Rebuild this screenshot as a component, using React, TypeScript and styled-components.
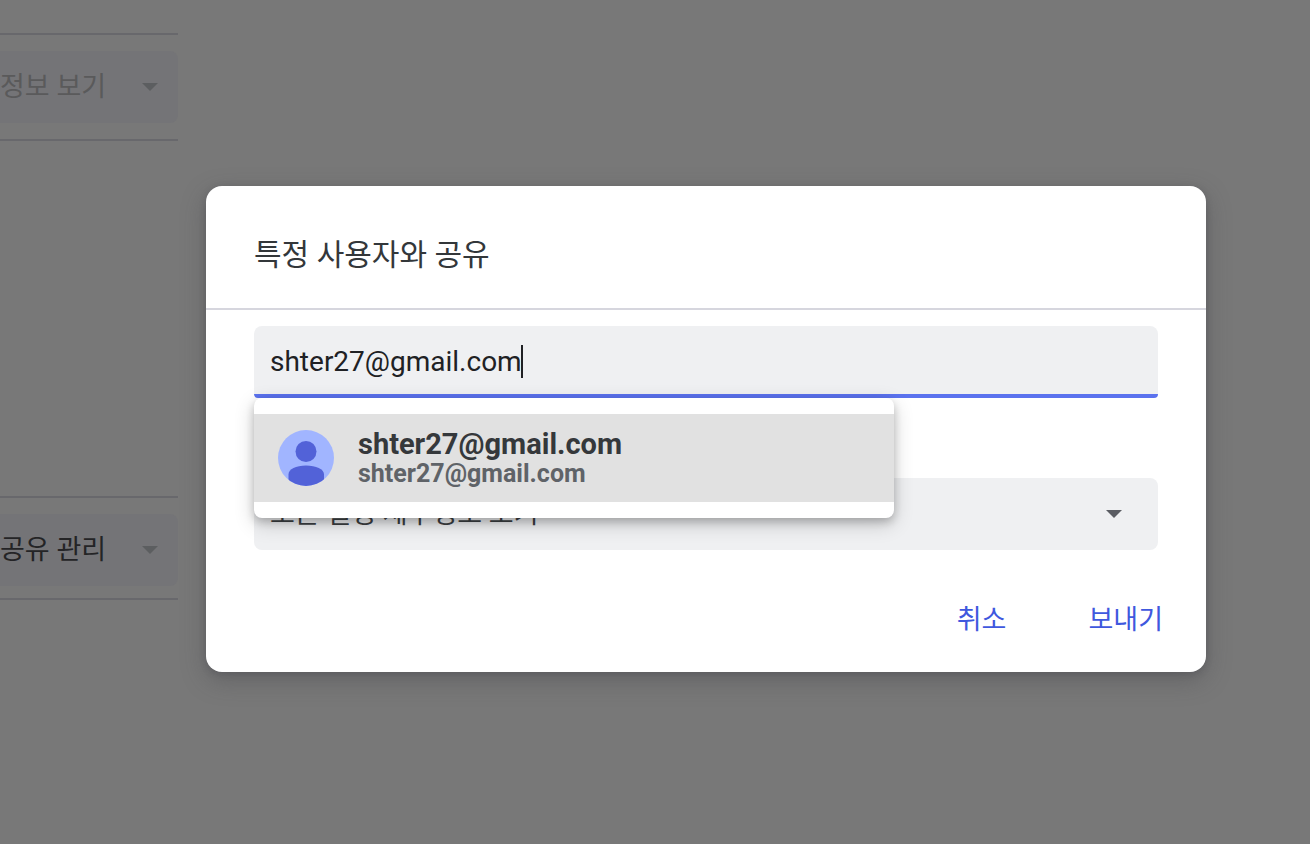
import React, { useState } from "react";
import styled, { createGlobalStyle } from "styled-components";

const GlobalStyle = createGlobalStyle`
  * { box-sizing: border-box; }
  html, body { margin: 0; }
  body {
    background: #787878;
    font-family: Roboto, "Noto Sans CJK KR", sans-serif;
  }
  input, select, button { font-family: inherit; }
`;

const Screen = styled.div`
  display: flex;
  align-items: flex-start;
  gap: 28px;
  min-height: 100vh;
  padding-right: 104px;
`;

const Background = styled.aside`
  flex: 0 0 178px;
  display: flex;
  flex-direction: column;
  gap: 355px;
  padding-top: 33px;
`;

const SettingRow = styled.section<{ $bottom: number }>`
  border-top: 2px solid #68686c;
  border-bottom: 2px solid #68686c;
  padding: 16px 0 ${(p) => p.$bottom}px;
`;

const SelectBox = styled.div<{ $dimmed?: boolean }>`
  position: relative;
  height: 72px;
  border-radius: ${(p) => (p.$dimmed ? "0 8px 8px 0" : "8px")};
  background: ${(p) => (p.$dimmed ? "#747477" : "#eff0f2")};
`;

const Select = styled.select<{ $color: string; $inset: number }>`
  appearance: none;
  display: block;
  width: 100%;
  height: 100%;
  padding: 0 72px 0 ${(p) => p.$inset}px;
  border: 0;
  outline: 0;
  background: transparent;
  color: ${(p) => p.$color};
  font-size: 27px;
  line-height: 40px;
`;

const Arrow = styled.svg<{ $right: number; $color: string }>`
  position: absolute;
  top: 32px;
  right: ${(p) => p.$right}px;
  fill: ${(p) => p.$color};
  pointer-events: none;
`;

const Dialog = styled.div`
  flex: 1;
  min-width: 0;
  margin-top: 186px;
  border-radius: 16px;
  background: #fff;
  box-shadow: 0 2px 6px rgba(60, 60, 67, 0.25), 0 8px 24px rgba(60, 60, 67, 0.35);
`;

const Title = styled.h1`
  margin: 0;
  padding: 49px 48px 33px;
  border-bottom: 2px solid #d6d6de;
  color: #33373a;
  font-size: 30px;
  line-height: 40px;
  font-weight: 400;
`;

const Fields = styled.div`
  display: flex;
  flex-direction: column;
  gap: 80px;
  padding: 16px 48px 0;
`;

const Combo = styled.div`
  position: relative;
`;

const EmailInput = styled.input`
  display: block;
  width: 100%;
  height: 72px;
  padding: 2px 16px 0;
  border: 0;
  border-bottom: 4px solid #5b72ee;
  border-radius: 8px 8px 4px 4px;
  outline: 0;
  background: #eff0f2;
  color: #202124;
  font-size: 28px;
  caret-color: transparent;
`;

const Caret = styled.span`
  position: absolute;
  top: 19px;
  left: 267px;
  width: 2px;
  height: 33px;
  background: #202124;
`;

const Suggestions = styled.div`
  position: absolute;
  z-index: 1;
  top: 100%;
  left: 0;
  width: 640px;
  max-width: 100%;
  padding: 16px 0;
  border-radius: 8px;
  background: #fff;
  box-shadow: 0 4px 8px rgba(0, 0, 0, 0.2), 0 6px 20px rgba(0, 0, 0, 0.19);
`;

const Suggestion = styled.button`
  display: flex;
  align-items: center;
  gap: 24px;
  width: 100%;
  height: 88px;
  padding: 0 24px;
  border: 0;
  background: #e1e1e1;
  text-align: left;
`;

const Person = styled.span`
  display: flex;
  flex-direction: column;
`;

const Name = styled.span`
  color: #35383b;
  font-size: 29px;
  line-height: 32px;
  font-weight: 700;
`;

const Address = styled.span`
  color: #5f6368;
  font-size: 25px;
  line-height: 28px;
  font-weight: 700;
`;

const Actions = styled.footer`
  display: flex;
  justify-content: flex-end;
  gap: 50px;
  padding: 46px 27px 28px;
`;

const Action = styled.button`
  height: 48px;
  padding: 0 16px;
  border: 0;
  background: transparent;
  color: #3f58de;
  font-size: 27px;
  line-height: 40px;
`;

type DropDownProps = {
  label: string;
  text: string;
  color: string;
  dimmed?: boolean;
};

function DropDown({ label, text, color, dimmed }: DropDownProps) {
  return (
    <SelectBox $dimmed={dimmed}>
      <Select aria-label={label} $color={color} $inset={dimmed ? 0 : 16}>
        <option>{text}</option>
      </Select>
      <Arrow
        $right={dimmed ? 20 : 36}
        $color={dimmed ? "#5c5e60" : "#5b5d63"}
        width="16"
        height="8"
        viewBox="0 0 16 8"
        aria-hidden="true"
      >
        <path d="M0 0h16L8 8z" />
      </Arrow>
    </SelectBox>
  );
}

function Avatar() {
  return (
    <svg width="56" height="56" viewBox="0 0 56 56" aria-hidden="true">
      <defs>
        <clipPath id="avatar-circle">
          <circle cx="28" cy="28" r="28" />
        </clipPath>
      </defs>
      <g clipPath="url(#avatar-circle)">
        <rect width="56" height="56" fill="#a1b5ff" />
        <circle cx="28" cy="21.5" r="10.5" fill="#5262d8" />
        <path d="M10.5 56V44.5C10.5 39 18 35.5 28 35.5S46 39 46 44.5V56Z" fill="#5262d8" />
      </g>
    </svg>
  );
}

export default function App() {
  const [email, setEmail] = useState("shter27@gmail.com");
  return (
    <>
      <GlobalStyle />
      <Screen>
        <Background>
          <SettingRow $bottom={16}>
            <DropDown label="공개 권한" text="정보 보기" color="#5a5a5b" dimmed />
          </SettingRow>
          <SettingRow $bottom={12}>
            <DropDown label="사용자 권한" text="공유 관리" color="#242426" dimmed />
          </SettingRow>
        </Background>
        <Dialog role="dialog" aria-labelledby="share-title">
          <Title id="share-title">특정 사용자와 공유</Title>
          <Fields>
            <Combo>
              <EmailInput
                aria-label="이메일"
                value={email}
                onChange={(e) => setEmail(e.target.value)}
              />
              <Caret />
              <Suggestions>
                <Suggestion type="button">
                  <Avatar />
                  <Person>
                    <Name>shter27@gmail.com</Name>
                    <Address>shter27@gmail.com</Address>
                  </Person>
                </Suggestion>
              </Suggestions>
            </Combo>
            <DropDown label="권한" text="모든 일정 세부정보 보기" color="#3c4043" />
          </Fields>
          <Actions>
            <Action type="button">취소</Action>
            <Action type="button">보내기</Action>
          </Actions>
        </Dialog>
      </Screen>
    </>
  );
}
